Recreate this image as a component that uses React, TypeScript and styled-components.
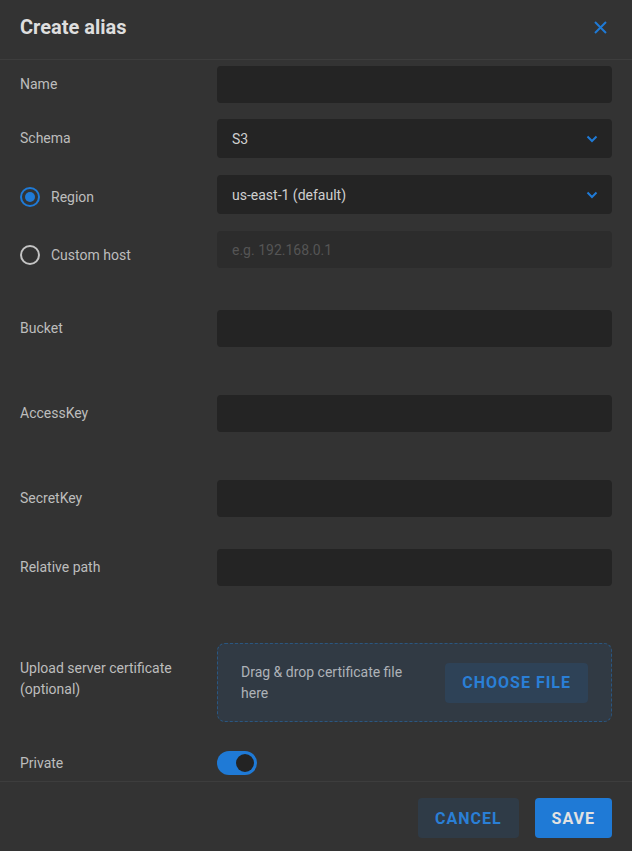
import React, { useState } from "react";
import styled, { createGlobalStyle } from "styled-components";

const GlobalStyle = createGlobalStyle`
  html, body {
    margin: 0;
    padding: 0;
    background: #333333;
  }
  * {
    box-sizing: border-box;
  }
`;

const Dialog = styled.div`
  width: 632px;
  height: 851px;
  display: flex;
  flex-direction: column;
  background: #333333;
  font-family: Roboto, "Liberation Sans", sans-serif;
  color: #bdbdbd;
`;

const Header = styled.div`
  height: 60px;
  display: flex;
  align-items: center;
  justify-content: space-between;
  padding: 0 20px 5px 20px;
  border-bottom: 1px solid #3d3d3d;
`;

const Title = styled.h1`
  margin: 0;
  font-size: 20px;
  font-weight: 700;
  color: #dedede;
`;

const CloseBtn = styled.button`
  width: 24px;
  height: 24px;
  padding: 0;
  border: none;
  background: transparent;
  display: flex;
  align-items: center;
  justify-content: center;
  cursor: pointer;
`;

const Body = styled.div`
  flex: 1;
  padding: 0 20px;
`;

const Row = styled.div<{ $top: number }>`
  display: grid;
  grid-template-columns: 197px 1fr;
  align-items: center;
  margin-top: ${(p) => p.$top}px;
`;

const Label = styled.label<{ $lift?: number }>`
  font-size: 14px;
  line-height: 21px;
  color: #bdbdbd;
  padding-bottom: ${(p) => (p.$lift ?? 0) * 2}px;
`;

const RadioLabel = styled.label<{ $drop: number }>`
  display: flex;
  align-items: center;
  gap: 11px;
  font-size: 14px;
  color: #bdbdbd;
  cursor: pointer;
  padding-top: ${(p) => p.$drop * 2}px;
`;

const RadioRing = styled.span<{ $on: boolean }>`
  width: 20px;
  height: 20px;
  border-radius: 50%;
  border: 2px solid ${(p) => (p.$on ? "#1f7ad6" : "#c4c4c4")};
  display: flex;
  align-items: center;
  justify-content: center;
  &::after {
    content: "";
    width: 10px;
    height: 10px;
    border-radius: 50%;
    background: #1f7ad6;
    display: ${(p) => (p.$on ? "block" : "none")};
  }
`;

const Input = styled.input`
  width: 100%;
  height: 37px;
  border: none;
  outline: none;
  border-radius: 4px;
  background: #242424;
  padding: 0 15px;
  font-family: inherit;
  font-size: 14px;
  color: #cfcfcf;
  &:disabled {
    background: #2c2c2c;
  }
  &::placeholder {
    color: #555555;
  }
`;

const Select = styled.div<{ $h: number }>`
  height: ${(p) => p.$h}px;
  border-radius: 4px;
  background: #242424;
  padding: 0 14px 0 15px;
  display: flex;
  align-items: center;
  justify-content: space-between;
  font-size: 14px;
  color: #cfcfcf;
  cursor: pointer;
`;

const DropZone = styled.div`
  height: 79px;
  border: 1px dashed #2a5782;
  border-radius: 8px;
  background: #313a44;
  display: flex;
  align-items: center;
  justify-content: space-between;
  padding: 0 23px 0 23px;
`;

const DropText = styled.span`
  width: 190px;
  font-size: 14px;
  line-height: 21px;
  color: #aeb2b8;
`;

const ChooseBtn = styled.button`
  height: 40px;
  padding: 0 17px;
  border: none;
  border-radius: 4px;
  background: #2e4257;
  color: #2a7fd6;
  font-family: inherit;
  font-size: 16px;
  font-weight: 700;
  letter-spacing: 1px;
  cursor: pointer;
`;

const Switch = styled.button<{ $on: boolean }>`
  width: 40px;
  height: 24px;
  padding: 3px;
  border: none;
  border-radius: 12px;
  background: ${(p) => (p.$on ? "#1f7ad6" : "#555")};
  display: flex;
  justify-content: ${(p) => (p.$on ? "flex-end" : "flex-start")};
  cursor: pointer;
  &::after {
    content: "";
    width: 18px;
    height: 18px;
    border-radius: 50%;
    background: #232323;
  }
`;

const Footer = styled.div`
  height: 70px;
  border-top: 1px solid #3d3d3d;
  display: flex;
  justify-content: flex-end;
  gap: 16px;
  padding: 16px 20px 0;
`;

const FooterBtn = styled.button<{ $primary?: boolean }>`
  height: 40px;
  padding: 0 17px;
  border: none;
  border-radius: 4px;
  background: ${(p) => (p.$primary ? "#1f7ad6" : "#2f3b47")};
  color: ${(p) => (p.$primary ? "#e2e2e2" : "#2a7fd6")};
  font-family: inherit;
  font-size: 16px;
  font-weight: 700;
  letter-spacing: 1px;
  cursor: pointer;
`;

const Chevron = () => (
  <svg width="12" height="8" viewBox="0 0 12 8">
    <polyline points="1.5,1.5 6,6 10.5,1.5" fill="none" stroke="#1f7ad6" strokeWidth="2" />
  </svg>
);

export default function App() {
  const [useRegion, setUseRegion] = useState(true);
  const [isPrivate, setIsPrivate] = useState(true);

  return (
    <>
      <GlobalStyle />
      <Dialog>
        <Header>
          <Title>Create alias</Title>
          <CloseBtn aria-label="close">
            <svg width="13" height="13" viewBox="0 0 13 13">
              <path d="M1 1 L12 12 M12 1 L1 12" stroke="#1f7ad6" strokeWidth="2" />
            </svg>
          </CloseBtn>
        </Header>

        <Body>
          <Row $top={6}>
            <Label>Name</Label>
            <Input />
          </Row>
          <Row $top={16}>
            <Label>Schema</Label>
            <Select $h={39}>
              S3
              <Chevron />
            </Select>
          </Row>
          <Row $top={17}>
            <RadioLabel $drop={2.5} onClick={() => setUseRegion(true)}>
              <RadioRing $on={useRegion} />
              Region
            </RadioLabel>
            <Select $h={39}>
              us-east-1 (default)
              <Chevron />
            </Select>
          </Row>
          <Row $top={17}>
            <RadioLabel $drop={5.5} onClick={() => setUseRegion(false)}>
              <RadioRing $on={!useRegion} />
              Custom host
            </RadioLabel>
            <Input placeholder="e.g. 192.168.0.1" disabled={useRegion} />
          </Row>
          <Row $top={42}>
            <Label>Bucket</Label>
            <Input />
          </Row>
          <Row $top={48}>
            <Label>AccessKey</Label>
            <Input />
          </Row>
          <Row $top={48}>
            <Label>SecretKey</Label>
            <Input />
          </Row>
          <Row $top={32}>
            <Label>Relative path</Label>
            <Input />
          </Row>
          <Row $top={57}>
            <Label $lift={4}>
              Upload server certificate
              <br />
              (optional)
            </Label>
            <DropZone>
              <DropText>Drag &amp; drop certificate file here</DropText>
              <ChooseBtn>CHOOSE FILE</ChooseBtn>
            </DropZone>
          </Row>
          <Row $top={29}>
            <Label>Private</Label>
            <Switch $on={isPrivate} onClick={() => setIsPrivate(!isPrivate)} />
          </Row>
        </Body>

        <Footer>
          <FooterBtn>CANCEL</FooterBtn>
          <FooterBtn $primary>SAVE</FooterBtn>
        </Footer>
      </Dialog>
    </>
  );
}
